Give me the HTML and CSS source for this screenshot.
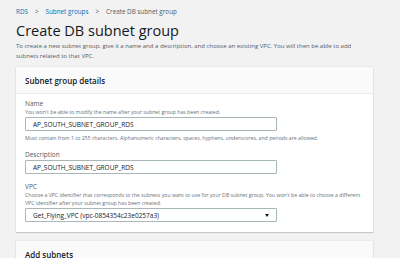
FILE: index.html
```html
<!DOCTYPE html>
<html lang="en">
<head>
    <meta name="viewport" content="width=device-width,initial-scale=1.0">
    <title>Create DB subnet group</title>
    <link rel="stylesheet" href="styles.css">
</head>
<body>
    <div class="page">
        <nav class="crumbs">
            <a href="#">RDS</a>
            <span class="sep">&gt;</span>
            <a href="#">Subnet groups</a>
            <span class="sep">&gt;</span>
            <span class="current">Create DB subnet group</span>
        </nav>
        <h1>Create DB subnet group</h1>
        <p class="intro">To create a new subnet group, give it a name and a description, and choose an existing VPC. You will then be able to add subnets related to that VPC.</p>

        <section class="card">
            <header class="card-head">Subnet group details</header>
            <div class="card-body">
                <div class="field">
                    <label>Name</label>
                    <div class="hint">You won't be able to modify the name after your subnet group has been created.</div>
                    <input class="input" type="text" value="AP_SOUTH_SUBNET_GROUP_RDS">
                    <div class="hint after">Must contain from 1 to 255 characters. Alphanumeric characters, spaces, hyphens, underscores, and periods are allowed.</div>
                </div>
                <div class="field">
                    <label>Description</label>
                    <input class="input" type="text" value="AP_SOUTH_SUBNET_GROUP_RDS">
                </div>
                <div class="field">
                    <label>VPC</label>
                    <div class="hint">Choose a VPC identifier that corresponds to the subnets you want to use for your DB subnet group. You won't be able to choose a different VPC identifier after your subnet group has been created.</div>
                    <div class="input select">
                        <span>Get_Flying_VPC (vpc-0854354c23e0257a3)</span>
                        <span class="caret"></span>
                    </div>
                </div>
            </div>
        </section>

        <section class="card">
            <header class="card-head">Add subnets</header>
        </section>
    </div>
</body>
</html>
```
FILE: styles.css
```css
html {
    box-sizing: border-box;
}

*,
*:before,
*:after {
    box-sizing: inherit;
}

body {
    margin: 0;
    background: #f2f2f2;
    font-family: "Open Sans", "Noto Sans", sans-serif;
    color: #16191f;
}

.page {
    padding: 6px 27px 0 16px;
}

.crumbs {
    display: flex;
    align-items: center;
    gap: 7px;
    font-size: 6.3px;
    height: 10px;
    color: #545b64;
}

.crumbs a {
    color: #0073bb;
    text-decoration: none;
}

h1 {
    margin: 5px 0 0;
    font-size: 14.5px;
    font-weight: 400;
    line-height: 20px;
}

.intro {
    margin: 0;
    font-size: 6px;
    line-height: 10px;
    color: #545b64;
}

.card {
    margin-top: 6px;
    background: #fff;
    box-shadow: 0 1px 1px rgba(0, 22, 44, 0.15), 0 0 1px rgba(0, 22, 44, 0.2);
}

.card + .card {
    margin-top: 9px;
}

.card-head {
    background: #fafafa;
    border-bottom: 1px solid #eaeded;
    height: 27px;
    padding: 0 9px;
    display: flex;
    align-items: center;
    font-size: 8px;
    font-weight: 600;
}

.card-body {
    padding: 5px 9px 10px;
}

.field + .field {
    margin-top: 8px;
}

label {
    display: block;
    font-size: 6.5px;
    line-height: 9px;
    color: #545b64;
}

.hint {
    font-size: 5.2px;
    line-height: 8px;
    color: #687078;
}

.hint.after {
    margin-top: 3px;
}

.input {
    display: flex;
    align-items: center;
    width: 252px;
    height: 14px;
    margin-top: 1px;
    padding: 0 7px;
    border: 1px solid #aab7b8;
    border-radius: 1px;
    font-family: inherit;
    font-size: 6.5px;
    color: #16191f;
    background: #fff;
}

.select {
    justify-content: space-between;
}

.caret {
    width: 0;
    height: 0;
    border-left: 2.5px solid transparent;
    border-right: 2.5px solid transparent;
    border-top: 3px solid #16191f;
}
```
